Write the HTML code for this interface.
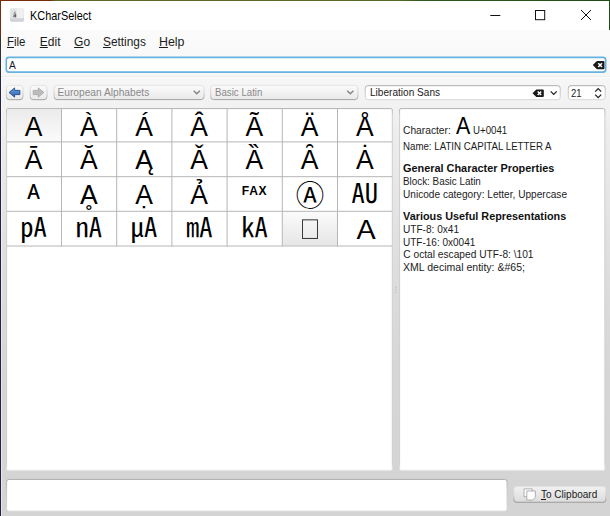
<!DOCTYPE html>
<html><head><meta charset="utf-8"><title>KCharSelect</title>
<style>
*{box-sizing:border-box;margin:0;padding:0}
html,body{width:610px;height:516px;overflow:hidden}
body{position:relative;font-family:"Liberation Sans","DejaVu Sans",sans-serif;color:#111;background:#d5d5d5}
.abs{position:absolute}
.t{position:absolute;white-space:pre;transform-origin:0 50%}
.t u{text-decoration:underline;text-underline-offset:1px;text-decoration-thickness:1px}
#bg{left:0;top:30px;width:610px;height:486px;background:linear-gradient(#fbfbfb 0px,#f6f6f6 50px,#ececec 110px,#dedede 230px,#d6d6d6 340px,#d4d4d4 486px)}
#title{left:0;top:0;width:610px;height:30px;background:#fff}
#topedge{left:0;top:0;width:610px;height:1px;background:linear-gradient(90deg,#7a2a0c 0,#7a2a0c 50px,#5d6a2a 56px,#56682a 400px,#2f5a1c 420px,#1f4d17 610px)}
#leftedge{left:0;top:0;width:1px;height:516px;background:linear-gradient(#7a2a0c 0,#7a2a0c 33px,#3a3030 40px,#2a2a35 70px,#25224a 100px,#25224a 516px)}
#rightedge{left:609px;top:0;width:1px;height:30px;background:#1f4d17}
.cell{position:absolute;height:34px;width:55px;text-align:center;font-size:26.5px;line-height:34px;color:#000;white-space:nowrap;transform:scaleY(1.035);transform-origin:50% 80%}
.sq{font-family:"Noto Sans CJK JP",sans-serif;font-weight:400;top:-1px}
.fw{font-family:"Noto Sans CJK JP",sans-serif;font-weight:400;display:inline-block;left:1px;top:2px;transform:scale(1.06,.95);transform-origin:50% 100%}
.fax{font-family:"Liberation Sans",sans-serif;font-weight:bold;font-size:12.1px;top:-9px;letter-spacing:.7px;left:.2px}
.circ{font-family:"Noto Sans CJK JP",sans-serif;font-size:28.5px;top:2px;left:.3px}
.sc{font-family:"Liberation Sans","DejaVu Sans",sans-serif;top:-5px}
.sq,.fw,.fax,.circ,.sc{line-height:0;position:relative}
.box{display:inline-block;width:16px;height:19px;border:1px solid #3a3a3a;vertical-align:0;position:relative;top:1px;left:.5px}
svg{position:absolute;left:0;top:0}
</style></head><body>
<div id="bg" class="abs"></div>
<div id="title" class="abs"></div>
<div id="topedge" class="abs"></div>
<div id="leftedge" class="abs"></div>
<div id="rightedge" class="abs"></div>
<svg width="610" height="516" viewBox="0 0 610 516">
<defs>
<linearGradient id="gbtn" x1="0" y1="0" x2="0" y2="1"><stop offset="0" stop-color="#fbfbfb"/><stop offset="1" stop-color="#e9e9e9"/></linearGradient>
<linearGradient id="gbtn2" x1="0" y1="0" x2="0" y2="1"><stop offset="0" stop-color="#f1f1f1"/><stop offset="1" stop-color="#dcdcdc"/></linearGradient>
<linearGradient id="gsel1" x1="0" y1="0" x2="0" y2="1"><stop offset="0" stop-color="#ebebeb"/><stop offset="1" stop-color="#fbfbfb"/></linearGradient>
<linearGradient id="gsel2" x1="0" y1="0" x2="0" y2="1"><stop offset="0" stop-color="#fbfbfb"/><stop offset="1" stop-color="#e6e6e6"/></linearGradient>
<linearGradient id="garrow" x1="0" y1="0" x2="0" y2="1"><stop offset="0" stop-color="#6ea0dc"/><stop offset="1" stop-color="#2c62ae"/></linearGradient>
<linearGradient id="gstroke" x1="0" y1="0" x2="0" y2="1"><stop offset="0" stop-color="#e2e2e2"/><stop offset=".6" stop-color="#cdcdcd"/><stop offset="1" stop-color="#9a9a9a"/></linearGradient>
<linearGradient id="gsunk" x1="0" y1="0" x2="0" y2="1"><stop offset="0" stop-color="#adadad"/><stop offset=".35" stop-color="#c6c6c6"/><stop offset="1" stop-color="#d6d6d6"/></linearGradient>
<linearGradient id="gsunk2" x1="0" y1="0" x2="0" y2="1"><stop offset="0" stop-color="#b2b2b2"/><stop offset=".02" stop-color="#cdcdcd"/><stop offset=".98" stop-color="#cfcfcf"/><stop offset="1" stop-color="#e6e6e6"/></linearGradient>
<linearGradient id="gkey" x1="0" y1="0" x2="0" y2="1"><stop offset="0" stop-color="#e6e6e8"/><stop offset=".7" stop-color="#dcdde0"/><stop offset="1" stop-color="#c8ccd3"/></linearGradient>
</defs>
<!-- title icon -->
<g><rect x="9.900" y="8.200" width="14.200" height="13.500" rx="1.800" fill="url(#gkey)"/><rect x="10.400" y="8.600" width="13.200" height="9.300" rx="1.300" fill="#f0f0f1"/><path d="M10.400 9.900a1.300 1.300 0 0 1 1.300-1.300h5v9.300h-5a1.300 1.300 0 0 1-1.300-1.300z" fill="#e3e3e5"/><path d="M13.500 14.100q1.100-.9 2.200-.1v3.300M15.700 15.300q-2.300-.2-2.300 1 .2 1.200 2.300.2" stroke="#555" stroke-width=".95" fill="none"/><rect x="14.300" y="11.600" width="1.200" height="1" fill="#666"/></g>
<!-- window controls -->
<g stroke="#111" stroke-width="1" fill="none"><path d="M490.300 15.500h10"/><rect x="535.500" y="10.500" width="9.200" height="9.200"/><path d="M581 10l10 10M591 10l-10 10"/></g>
<path d="M1 76.500H610" stroke="#000" stroke-opacity=".035"/><path d="M1 77.500H610" stroke="#fff" stroke-opacity=".75"/>
<!-- search -->
<rect x="6.300" y="57.400" width="599.400" height="14.700" rx="2.600" fill="#fff" stroke="#66b2e0" stroke-width="1.600"/>
<g transform="translate(592.800,60.900) scale(1.03,1.05)"><path d="M0 4L4 0h6.300a1 1 0 0 1 1 1v6a1 1 0 0 1-1 1H4z" fill="#1a1a1a"/><path d="M5.300 2.200l3.600 3.600M8.900 2.200L5.300 5.800" stroke="#fff" stroke-width="1.500" fill="none"/></g>
<!-- toolbar buttons -->
<rect x="6.400" y="85.400" width="16.600" height="14.300" rx="3" fill="url(#gbtn)" stroke="url(#gstroke)" stroke-width=".9"/>
<rect x="30.200" y="85.400" width="16.800" height="14.300" rx="3" fill="url(#gbtn)" stroke="url(#gstroke)" stroke-width=".9"/>
<path d="M9 92.500l5.600-4.600v2.500h5.300v4.200h-5.300v2.500z" fill="url(#garrow)" stroke="#1d4b8f" stroke-width=".9" stroke-linejoin="round"/>
<path d="M43.900 92.500l-5.600-4.600v2.500h-5.100v4.200h5.100v2.500z" fill="#bcbcbc" stroke="#a4a4a4" stroke-width=".8" stroke-linejoin="round"/>
<!-- combos -->
<rect x="54.100" y="85.300" width="150" height="14.300" rx="3" fill="url(#gbtn)" stroke="url(#gstroke)" stroke-width=".9"/>
<rect x="210.700" y="85.300" width="147.200" height="14.300" rx="3" fill="url(#gbtn)" stroke="url(#gstroke)" stroke-width=".9"/>
<rect x="365.300" y="85.700" width="194.900" height="14" rx="2.500" fill="#fff" stroke="url(#gsunk)" stroke-width="1"/>
<rect x="568.300" y="85.700" width="36.900" height="14" rx="2.500" fill="#fff" stroke="url(#gsunk)" stroke-width="1"/>
<g stroke="#858585" stroke-width="1.400" fill="none"><path d="M193.700 90.700l3.100 3.100 3.100-3.100"/><path d="M347.200 90.700l3.100 3.100 3.100-3.100"/></g>
<g stroke="#222" stroke-width="1.300" fill="none"><path d="M550.700 91.400l3 3 3-3"/><path d="M595.200 91.600l3-3 3 3"/><path d="M595.200 94.600l3 3 3-3"/></g>
<g transform="translate(532.500,89.400)"><path d="M0 3.800L3.800 0h6.500a1 1 0 0 1 1 1v5.600a1 1 0 0 1-1 1H3.800z" fill="#1a1a1a"/><path d="M5.200 2l3.500 3.600M8.700 2L5.200 5.600" stroke="#fff" stroke-width="1.500" fill="none"/></g>
<!-- frames -->
<rect x="6.600" y="108.600" width="385.700" height="361.700" rx="1.400" fill="#fff" stroke="url(#gsunk2)" stroke-width="1"/>
<rect x="399.600" y="108.600" width="205.300" height="361.700" rx="1.400" fill="#fff" stroke="url(#gsunk2)" stroke-width="1"/>
<rect x="7" y="109" width="54" height="32.400" fill="url(#gsel1)"/>
<rect x="282.800" y="211.800" width="54.200" height="33.700" fill="url(#gsel2)"/>
<g stroke="#b6b6b6" stroke-width="1" fill="none"><path d="M61.50 109V246.50"/><path d="M116.70 109V246.50"/><path d="M171.90 109V246.50"/><path d="M227.10 109V246.50"/><path d="M282.30 109V246.50"/><path d="M337.50 109V246.50"/><path d="M7 141.90H392"/><path d="M7 176.70H392"/><path d="M7 211.30H392"/><path d="M7 246.00H392"/></g>
<g fill="#b4b4b4"><rect x="395.400" y="286.800" width="1" height="1"/><rect x="395.400" y="289.200" width="1" height="1"/><rect x="395.400" y="291.600" width="1" height="1"/></g>
<path d="M1.500 31V516" stroke="#fff" stroke-opacity=".45"/>
<!-- bottom -->
<rect x="6.600" y="479.400" width="500.500" height="31.800" rx="2.500" fill="#fff" stroke="url(#gsunk)" stroke-width="1"/>
<rect x="513.800" y="486.600" width="92" height="15.600" rx="3" fill="url(#gbtn2)" stroke="url(#gstroke)" stroke-width=".9"/>
<path d="M513.800 500v-.5a3 3 0 0 0 3 3h86a3 3 0 0 0 3-3" fill="none" stroke="#a8a8a8" stroke-width=".8"/>
<g fill="#fdfdfd" stroke="#a0a0a0" stroke-width=".8"><path d="M524 488.900h8.200v7.800h-8.200z"/><path d="M526.800 491h8.600v6.300l-2.600 2.700h-6z"/></g>
</svg>
<div class="cell" style="left:6.1px;top:109.5px">A</div>
<div class="cell" style="left:61.3px;top:109.5px">À</div>
<div class="cell" style="left:116.5px;top:109.5px">Á</div>
<div class="cell" style="left:171.7px;top:109.5px">Â</div>
<div class="cell" style="left:226.9px;top:109.5px">Ã</div>
<div class="cell" style="left:282.1px;top:109.5px">Ä</div>
<div class="cell" style="left:337.3px;top:109.5px">Å</div>
<div class="cell" style="left:6.1px;top:142.9px">Ā</div>
<div class="cell" style="left:61.3px;top:142.9px">Ă</div>
<div class="cell" style="left:116.5px;top:142.9px">Ą</div>
<div class="cell" style="left:171.7px;top:142.9px">Ǎ</div>
<div class="cell" style="left:226.9px;top:142.9px">Ȁ</div>
<div class="cell" style="left:282.1px;top:142.9px">Ȃ</div>
<div class="cell" style="left:337.3px;top:142.9px">Ȧ</div>
<div class="cell" style="left:6.1px;top:177.7px"><span class="sc">ᴀ</span></div>
<div class="cell" style="left:61.3px;top:177.7px">Ḁ</div>
<div class="cell" style="left:116.5px;top:177.7px">Ạ</div>
<div class="cell" style="left:171.7px;top:177.7px">Ả</div>
<div class="cell" style="left:226.9px;top:177.7px"><span class="fax">FAX</span></div>
<div class="cell" style="left:282.1px;top:177.7px"><span class="circ">Ⓐ</span></div>
<div class="cell" style="left:337.3px;top:177.7px"><span class="sq">㍳</span></div>
<div class="cell" style="left:6.1px;top:212.3px"><span class="sq">㎀</span></div>
<div class="cell" style="left:61.3px;top:212.3px"><span class="sq">㎁</span></div>
<div class="cell" style="left:116.5px;top:212.3px"><span class="sq">㎂</span></div>
<div class="cell" style="left:171.7px;top:212.3px"><span class="sq">㎃</span></div>
<div class="cell" style="left:226.9px;top:212.3px"><span class="sq">㎄</span></div>
<div class="cell" style="left:282.1px;top:212.3px"><span class="box"></span></div>
<div class="cell" style="left:337.3px;top:212.3px"><span class="fw">Ａ</span></div>
<div class="t" style="left:30.3px;top:8px;font-size:12px;line-height:17px;color:#000;transform:scaleX(0.908);">KCharSelect</div>
<div class="t" style="left:7.4px;top:34px;font-size:12px;line-height:17px;color:#1c1c1c;transform:scaleX(0.956);"><u>F</u>ile</div>
<div class="t" style="left:39.8px;top:34px;font-size:12px;line-height:17px;color:#1c1c1c;"><u>E</u>dit</div>
<div class="t" style="left:74.1px;top:34px;font-size:12px;line-height:17px;color:#1c1c1c;"><u>G</u>o</div>
<div class="t" style="left:102.6px;top:34px;font-size:12px;line-height:17px;color:#1c1c1c;transform:scaleX(0.989);"><u>S</u>ettings</div>
<div class="t" style="left:158.9px;top:34px;font-size:12px;line-height:17px;color:#1c1c1c;transform:scaleX(1.029);"><u>H</u>elp</div>
<div class="t" style="left:9.0px;top:59px;font-size:10.2px;line-height:14px;color:#1c1c1c;">A</div>
<div class="t" style="left:57.5px;top:86px;font-size:10.2px;line-height:14px;color:#8a8a8a;">European Alphabets</div>
<div class="t" style="left:214.9px;top:86px;font-size:10.2px;line-height:14px;color:#8a8a8a;transform:scaleX(0.951);">Basic Latin</div>
<div class="t" style="left:369.6px;top:86px;font-size:10.2px;line-height:14px;color:#1c1c1c;transform:scaleX(0.989);">Liberation Sans</div>
<div class="t" style="left:570.9px;top:86px;font-size:10.6px;line-height:15px;color:#1c1c1c;transform:scaleX(0.899);">21</div>
<div class="t" style="left:403.3px;top:124px;font-size:10.2px;line-height:14px;color:#1c1c1c;transform:scaleX(1.005);">Character:</div>
<div class="t" style="left:455.5px;top:109px;font-size:24.2px;line-height:34px;color:#000;transform:scaleX(0.886);">A</div>
<div class="t" style="left:473.4px;top:124px;font-size:10.2px;line-height:14px;color:#1c1c1c;transform:scaleX(0.950);">U+0041</div>
<div class="t" style="left:403.3px;top:140px;font-size:10.2px;line-height:14px;color:#1c1c1c;transform:scaleX(0.952);">Name: LATIN CAPITAL LETTER A</div>
<div class="t" style="left:403.3px;top:162px;font-size:10.2px;line-height:14px;color:#111;font-weight:700;transform:scaleX(1.069);">General Character Properties</div>
<div class="t" style="left:403.3px;top:175px;font-size:10.2px;line-height:14px;color:#1c1c1c;transform:scaleX(0.968);">Block: Basic Latin</div>
<div class="t" style="left:403.3px;top:188px;font-size:10.2px;line-height:14px;color:#1c1c1c;transform:scaleX(0.992);">Unicode category: Letter, Uppercase</div>
<div class="t" style="left:403.3px;top:210px;font-size:10.2px;line-height:14px;color:#111;font-weight:700;transform:scaleX(1.064);">Various Useful Representations</div>
<div class="t" style="left:403.3px;top:223px;font-size:10.2px;line-height:14px;color:#1c1c1c;transform:scaleX(0.989);">UTF-8: 0x41</div>
<div class="t" style="left:403.3px;top:236px;font-size:10.2px;line-height:14px;color:#1c1c1c;transform:scaleX(0.982);">UTF-16: 0x0041</div>
<div class="t" style="left:403.3px;top:248px;font-size:10.2px;line-height:14px;color:#1c1c1c;">C octal escaped UTF-8: \101</div>
<div class="t" style="left:403.3px;top:261px;font-size:10.2px;line-height:14px;color:#1c1c1c;transform:scaleX(1.034);">XML decimal entity: &amp;#65;</div>
<div class="t" style="left:540.8px;top:488px;font-size:10.2px;line-height:14px;color:#1c1c1c;transform:scaleX(0.984);"><u>T</u>o Clipboard</div>
</body></html>
